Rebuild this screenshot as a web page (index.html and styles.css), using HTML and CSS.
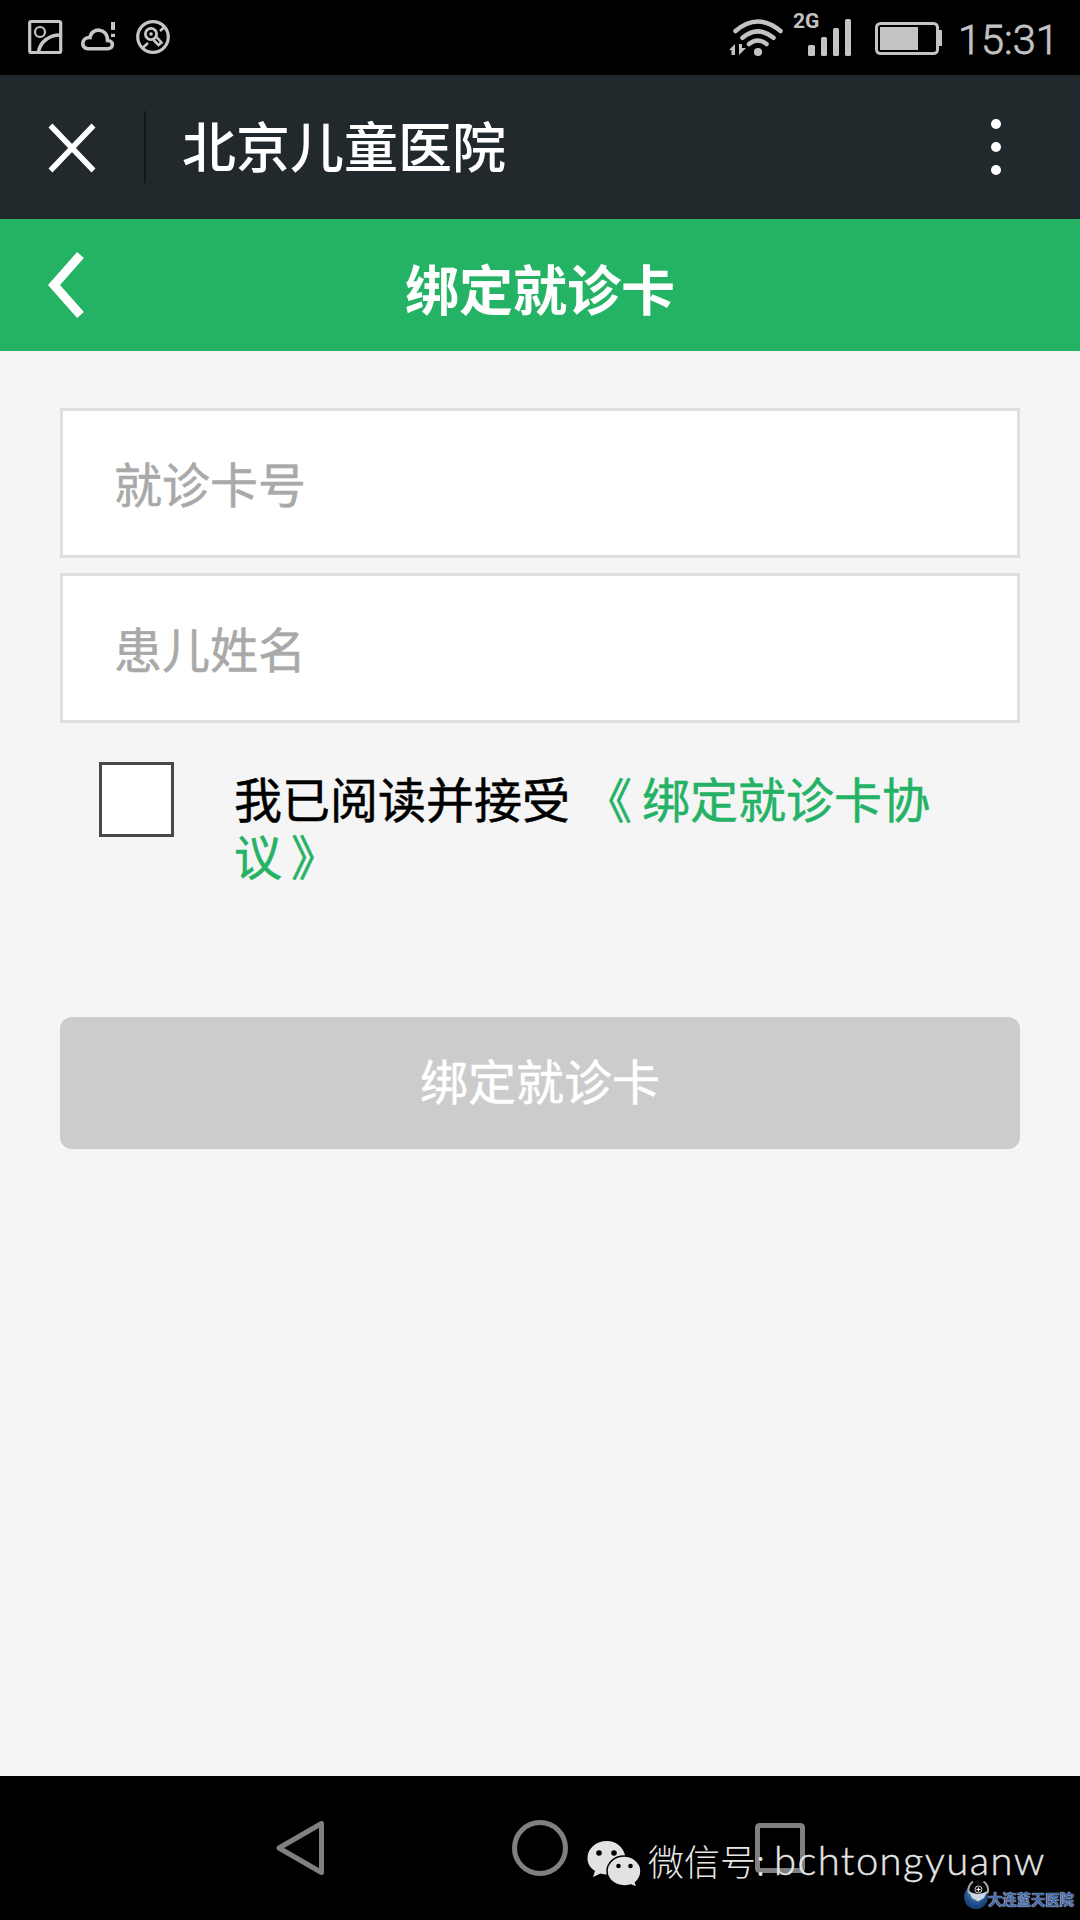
FILE: index.html
```html
<!DOCTYPE html>
<html lang="zh-CN">
<head>
<meta charset="utf-8">
<title>绑定就诊卡</title>
<link rel="stylesheet" href="styles.css">
</head>
<body>
<div class="screen">
  <div class="status">
    <svg class="status-left" width="144" height="40" viewBox="27 18 144 40" fill="none" stroke="#c6c6c6">
      <rect x="29.7" y="21.5" width="31" height="31" rx="1.5" stroke-width="3.2"/>
      <circle cx="40" cy="32" r="5" stroke-width="2.2"/>
      <path d="M38.500 52C40 42 49 35 60 35" stroke-width="3.5"/>
      <path d="M88 48.700H107.500C114 48.700 114 40.500 107.500 40.500C107.500 27.500 91.500 27 90 37.500C81 37 80.500 48.700 88 48.700Z" stroke-width="3.6"/>
      <path d="M113 22V30M113 33.800V37" stroke-width="4"/>
      <circle cx="153" cy="37" r="15.300" stroke-width="3.2"/>
      <circle cx="151" cy="34" r="5.600" stroke-width="2.800"/>
      <circle cx="151" cy="34" r="1.800" fill="#c6c6c6" stroke="none"/>
      <path d="M153.500 40L158.500 45L161.500 42.500L156.500 37M160 31L165 26.500M142.500 48L148 43" stroke-width="2.600"/>
    </svg>
    <div class="status-right">
      <svg width="56" height="42" viewBox="728 16 56 42" fill="none" stroke="#c3c3c3" stroke-width="4.500" stroke-linecap="round">
        <path d="M735.500 31Q757.800 12 780.500 31M742.500 37.800Q757.800 25 773.500 37.800M749 44Q757.800 37 766.500 44"/>
        <circle cx="758" cy="52" r="4.100" fill="#c3c3c3" stroke="none"/>
        <path d="M729 50L735 44V55H731.500V50ZM739 44H742V48H746L739 55Z" fill="#c3c3c3" stroke="none"/>
      </svg>
      <div class="signal">
        <span class="network">2G</span>
        <svg width="44" height="38" viewBox="808 19 44 38" fill="#c3c3c3">
          <rect x="808" y="45" width="7" height="11" rx="1.500"/><rect x="821" y="37" width="6" height="19" rx="1.500"/><rect x="833" y="28" width="6" height="28" rx="1.500"/><rect x="845" y="19" width="6" height="37" rx="1.500"/>
        </svg>
      </div>
      <svg class="battery" width="68" height="34" viewBox="875 22 68 34">
        <rect x="876.500" y="23.500" width="61" height="30" rx="4" fill="none" stroke="#c3c3c3" stroke-width="3"/>
        <path d="M880 27H918V50H880ZM938 30H942V46H938Z" fill="#c3c3c3"/>
      </svg>
      <span class="clock">15:31</span>
    </div>
  </div>

  <div class="app-bar">
    <svg class="dismiss" width="48" height="50" viewBox="0 0 48 50" fill="none" stroke="#fff" stroke-width="5.500"><path d="M2.500 2.500L45.500 47.500M45.500 2.500L2.500 47.500"/></svg>
    <span class="divider"></span>
    <span class="app-name">北京儿童医院</span>
    <span class="more"><i></i><i></i><i></i></span>
  </div>

  <div class="page-bar">
    <svg class="back" width="38" height="68" viewBox="0 0 38 68" fill="none" stroke="#fff" stroke-width="9"><path d="M32.500 4L6 34L32.500 64"/></svg>
    <h1 class="page-title">绑定就诊卡</h1>
  </div>

  <form class="form">
    <input class="field" type="text" placeholder="就诊卡号">
    <input class="field" type="text" placeholder="患儿姓名">
    <div class="agreement">
      <span class="checkbox"></span>
      <p class="agreement-text">我已阅读并接受<a class="link"><span class="open">《</span>绑定就诊卡协议<span class="close">》</span></a></p>
    </div>
    <button class="submit" type="button">绑定就诊卡</button>
  </form>

  <div class="nav">
    <svg width="50" height="56" viewBox="0 0 50 56"><path d="M46.500 3.500V52.500L4 28Z"/></svg>
    <svg width="56" height="56" viewBox="0 0 56 56"><circle cx="28" cy="28" r="25.500"/></svg>
    <svg width="50" height="50" viewBox="0 0 50 50"><rect x="2.500" y="2.500" width="45" height="45" rx="2"/></svg>
    <div class="account">
      <svg width="56" height="48" viewBox="0 0 56 48">
        <path fill="#e2e2e2" d="M20 1C9 1 .500 8.500 .500 18C.500 24 3.500 28 8 31L6 37L13.500 33.500C16 34.300 18 34.500 21 34.500C39 34 39 17 38 15C36 7 29 1 20 1Z"/>
        <path fill="#e2e2e2" stroke="#000" stroke-width="1.500" d="M37 16C28 16 20 22.500 20 31C20 39.500 28 46 37 46C40 46 42 45.500 44 45L50 47.500L48.500 42.500C52 39.500 54 36 54 31C54 22.500 46 16 37 16Z"/>
        <circle cx="12" cy="13" r="2.800"/><circle cx="27" cy="13" r="2.800"/><circle cx="31.500" cy="26" r="2.300"/><circle cx="43.500" cy="26" r="2.300"/>
      </svg>
      <span class="account-label">微信号:</span><span class="account-id">bchtongyuanw</span>
    </div>
    <div class="brand">
      <svg width="26" height="30" viewBox="0 0 26 30">
        <defs><radialGradient id="orb" cx=".5" cy=".35"><stop offset="0" stop-color="#9fbbd8"/><stop offset=".5" stop-color="#3b6ba6"/><stop offset="1" stop-color="#1a4580"/></radialGradient></defs>
        <circle cx="12" cy="17" r="12" fill="url(#orb)"/>
        <circle cx="14" cy="9" r="9" fill="#080808"/>
        <path d="M9 1.500A10 10 0 0 0 5 13.500M19.500 1.500A10 10 0 0 1 23.500 13.500" fill="none" stroke="#aaa" stroke-width="2"/>
        <path d="M4.500 11Q14 17 23.500 11L20 18L14 21.500L8 18Z" fill="#c9d8e0"/>
        <circle cx="14.500" cy="9.500" r="3.500" fill="#111" stroke="#ccc"/><path d="M14.500 7.500V11.500M12.500 9.500H16.500" stroke="#fff"/>
      </svg>
      <span class="brand-name">大连蓝天医院</span>
    </div>
  </div>
</div>
</body>
</html>
```
FILE: styles.css
```css
* { box-sizing: border-box; }

body {
  margin: 0;
  font-family: Roboto, "Noto Sans CJK SC", sans-serif;
}

svg { display: block; flex: none; }

.screen {
  display: flex;
  flex-direction: column;
  width: 1080px;
  height: 1920px;
  background: #f5f5f5;
}

.status {
  display: flex;
  justify-content: space-between;
  height: 75px;
  padding: 16px 21px 0 27px;
  background: #000;
  color: #c3c3c3;
}

.status-left { margin-top: 2px; }

.status-right { display: flex; }

.signal {
  display: flex;
  padding: 3px 0 0 9px;
}

.network {
  width: 15px;
  margin-top: -8px;
  font-size: 21px;
  font-weight: 700;
  line-height: 21px;
}

.battery { margin: 6px 0 0 23px; }

.clock {
  width: 101px;
  margin-left: 15px;
  font-size: 41.5px;
  font-weight: 300;
  line-height: 48px;
  -webkit-text-stroke: 0.8px #c3c3c3;
  white-space: nowrap;
}

.app-bar {
  display: flex;
  align-items: center;
  height: 144px;
  padding: 0 79px 0 48px;
  background: #22292c;
  color: #fff;
}

.dismiss { margin-top: 2px; }

.divider {
  width: 2px;
  height: 72px;
  margin-left: 48px;
  background: #12181b;
}

.app-name {
  margin: 6px 0 0 36px;
  font-size: 54px;
  font-weight: 500;
  line-height: 80px;
}

.more {
  display: flex;
  flex-direction: column;
  gap: 13px;
  margin-left: auto;
}

.more i {
  width: 10px;
  height: 10px;
  border-radius: 50%;
  background: #fff;
}

.page-bar {
  display: grid;
  grid-template-columns: 1fr auto 1fr;
  align-items: center;
  height: 132px;
  background: #24b265;
  color: #fff;
}

.back { margin-left: 48px; }

.page-title {
  margin: 16px 0 0;
  font-size: 54px;
  font-weight: 700;
  line-height: 80px;
}

.form {
  display: flex;
  flex-direction: column;
  flex: 1;
  gap: 15px;
  padding: 57px 60px 0;
}

.field {
  width: 100%;
  height: 150px;
  padding: 7px 51px 0;
  border: 3px solid #dedede;
  border-radius: 0;
  background: #fff;
  font-family: inherit;
  font-size: 48px;
}

.field::placeholder {
  color: #a9a9a9;
  opacity: 1;
  -webkit-text-stroke: 0.5px #a9a9a9;
}

.agreement {
  display: flex;
  gap: 60px;
  height: 240px;
  padding: 24px 0 0 39px;
}

.checkbox {
  flex: none;
  width: 75px;
  height: 75px;
  border: 3px solid #484848;
  background: #fff;
}

.agreement-text {
  width: 730px;
  margin: 11px 0 0;
  color: #000;
  font-size: 48px;
  line-height: 57px;
  -webkit-text-stroke: 0.5px currentColor;
}

.link { color: #24b265; }

.open { margin-left: 14px; margin-right: 10px; }

.close { margin-left: 9px; }

.submit {
  height: 132px;
  margin-top: 24px;
  padding: 0 0 8px;
  border: 0;
  border-radius: 12px;
  background: #ccc;
  color: #fff;
  font-family: inherit;
  font-size: 48px;
  -webkit-text-stroke: 0.5px #fff;
}

.nav {
  position: relative;
  display: flex;
  align-items: center;
  gap: 187px;
  height: 144px;
  padding-left: 275px;
  background: #000;
}

.nav > svg {
  fill: none;
  stroke: #808080;
  stroke-width: 5;
  stroke-linejoin: round;
}

/* Account line and brand mark lie over the navigation keys */
.account {
  position: absolute;
  left: 587px;
  top: 64px;
  display: flex;
  color: #e6e6e6;
  white-space: nowrap;
}

.account-label {
  margin-left: 5px;
  font-family: "Noto Sans CJK SC", sans-serif;
  font-size: 36px;
  font-weight: 300;
  line-height: 41px;
}

.account-id {
  position: absolute;
  left: 187px;
  top: 0;
  font-family: Lato, sans-serif;
  font-size: 40px;
  font-weight: 300;
  line-height: 40px;
  letter-spacing: 1.4px;
  -webkit-text-stroke: 0.4px #e6e6e6;
}

.brand {
  position: absolute;
  left: 964px;
  top: 104px;
  display: flex;
}

.brand-name {
  margin: 10px 0 0 -2px;
  color: #3f68aa;
  font-size: 14.300px;
  font-weight: 700;
  line-height: 20px;
  white-space: nowrap;
  text-shadow: 0 0 1px #dce6f5, 0 0 1px #dce6f5;
}
```
